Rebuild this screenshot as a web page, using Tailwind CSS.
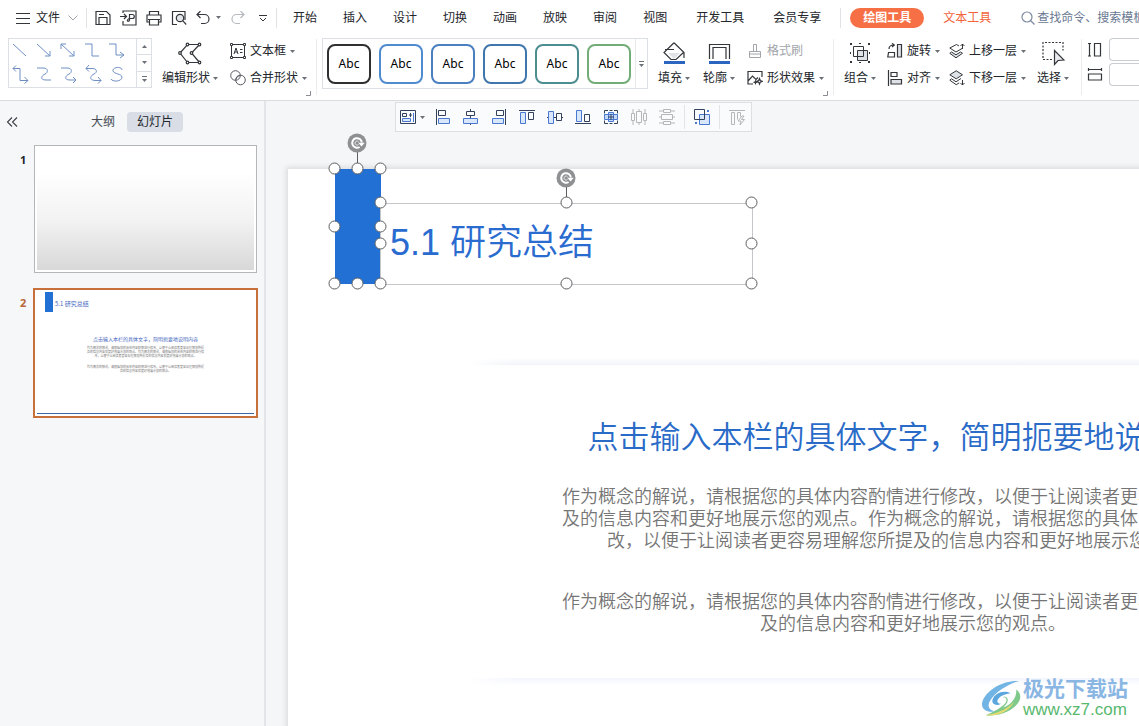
<!DOCTYPE html>
<html lang="zh-CN">
<head>
<meta charset="utf-8">
<title>WPS 演示</title>
<meta name="viewport" content="width=device-width, initial-scale=1">
<script src="https://cdn.jsdelivr.net/npm/@tailwindcss/browser@4"></script>
</head>
<body class="flex h-screen flex-col overflow-hidden bg-[#f5f6f8] font-['Liberation_Sans','Noto_Sans_CJK_SC',sans-serif] text-xs text-[#23262b]">
<svg class="hidden" aria-hidden="true">
  <symbol id="caret" viewBox="0 0 5 3"><path d="M0 0h5L2.500 3z" fill="#6b6f76"/></symbol>
  <symbol id="corner" viewBox="0 0 5 5"><path d="M4.500 0v4.500H0" fill="none" stroke="#8a8e94"/></symbol>
  <symbol id="rot" viewBox="0 0 20 20"><circle cx="10" cy="10" r="9.500" fill="#8f9092"/><path d="M12.600 14A4.800 4.800 0 1 1 14.800 9.500" fill="none" stroke="#fff" stroke-width="2"/><path d="M11.300 9.800h6.400l-3.200 3.800z" fill="#fff"/><path d="M11.600 11.300a2 2 0 1 1 .1-2.300" fill="none" stroke="#e4e4e4"/></symbol>
</svg>

<header class="shrink-0 overflow-hidden border-b border-[#d9dce0] bg-white">
  <!-- Menu bar -->
  <nav class="flex h-[35px] items-center whitespace-nowrap pl-4">
    <button class="flex items-center gap-[6px]">
      <svg class="size-[14px]" viewBox="0 0 14 14" stroke="#33363b"><path d="M0 2.500h14M0 7.500h14M0 12.500h14"/></svg>
      文件
      <svg class="ml-[2px] h-[6px] w-[10px]" viewBox="0 0 10 6" fill="none" stroke="#a0a4aa"><path d="M.5.500 5 5 9.500.500"/></svg>
    </button>
    <span class="ml-2 h-5 w-px bg-[#e0e2e5]"></span>
    <div class="ml-2 flex items-center gap-[9px]">
      <button aria-label="保存"><svg class="size-4" viewBox="0 0 16 16" fill="none" stroke="#33363b" stroke-width="1.200"><path d="M1 1.500h10.500L15 5v9.500H1zM4 14.500V7.500h8v7M4 4.500h5"/></svg></button>
      <button aria-label="输出为PDF"><svg class="h-4 w-[17px]" viewBox="0 0 17 16" fill="none" stroke="#33363b" stroke-width="1.200"><path d="M3 3V1h13v14H3v-4M0 6.500h6M4 4l2.500 2.500L4 9M9.500 4.500h2.800a1.900 1.900 0 0 1 0 4H9.500zM9.500 4.500v5.500c0 2-2.800 1.200-2 0 .5-1 1.500-1.500 2-1.500"/></svg></button>
      <button aria-label="打印"><svg class="size-4" viewBox="0 0 16 16" fill="none" stroke="#33363b" stroke-width="1.200"><path d="M3.500 5V1.500h9V5M3.500 12H1V5h14v7h-2.500M3.500 9.500h9v5.500h-9zM2 9.500h12"/></svg></button>
      <button aria-label="打印预览"><svg class="size-4" viewBox="0 0 16 16" fill="none" stroke="#33363b" stroke-width="1.200"><path d="M6 14.500H1.500v-13h12.500V10"/><circle cx="9" cy="8" r="3.700" fill="#e3e6ea"/><path d="m11.700 10.700 3.500 3.800"/></svg></button>
    </div>
    <button aria-label="撤销" class="ml-[9px] flex items-center gap-[6px]"><svg class="size-[14px]" viewBox="0 0 14 14" fill="none" stroke="#33363b" stroke-width="1.200"><path d="M4.500 0 1 3.500 4.500 7M1 3.500h7.500a4.500 4.500 0 0 1 0 9H5"/></svg><svg class="h-[3px] w-[5px]"><use href="#caret"/></svg></button>
    <button aria-label="恢复" class="ml-[10px]"><svg class="size-[14px]" viewBox="0 0 14 14" fill="none" stroke="#b5b8bc" stroke-width="1.200"><path d="M9.500 0 13 3.500 9.500 7M13 3.500H5.500a4.500 4.500 0 0 0 0 9H9"/></svg></button>
    <button aria-label="更多" class="ml-[14px]"><svg class="size-2" viewBox="0 0 8 8" fill="none" stroke="#33363b"><path d="M0 1.500h8M1 4l3 3 3-3"/></svg></button>
    <span class="ml-[9px] h-5 w-px bg-[#e0e2e5]"></span>
    <div class="ml-4 flex items-center gap-[26px]">
      <button>开始</button><button>插入</button><button>设计</button><button>切换</button><button>动画</button><button>放映</button><button>审阅</button><button>视图</button>
    </div>
    <div class="ml-[29px] flex items-center gap-[29px]"><button>开发工具</button><button>会员专享</button></div>
    <span class="ml-[19px] h-5 w-px bg-[#e0e2e5]"></span>
    <button class="ml-[9px] h-5 rounded-full bg-[#f76f45] px-[13px] font-bold text-white">绘图工具</button>
    <button class="ml-[19px] text-[#f2633a]">文本工具</button>
    <label class="ml-[30px] flex min-w-0 flex-1 items-center gap-[2px]">
      <svg class="size-[14px] shrink-0" viewBox="0 0 14 14" fill="none" stroke="#7f8ba3" stroke-width="1.200"><circle cx="6" cy="6" r="5"/><path d="m9.500 9.500 4 4"/></svg>
      <input class="w-full min-w-0 bg-transparent outline-none placeholder:text-[#6a7892]" placeholder="查找命令、搜索模板" aria-label="搜索">
    </label>
  </nav>

  <!-- Ribbon -->
  <div class="flex h-[65px] whitespace-nowrap pl-2">
    <div class="mt-[3px] flex h-[50px] w-36 shrink-0 border border-[#dcdfe4]">
      <svg class="h-12 w-[127px]" viewBox="0 0 127 48" fill="none" stroke="#6f8fc4">
        <path d="m4 5 13 12M28 5l13 12m0-5v5h-5M52 5l13 12m0-5v5h-5M52 10V5h5M76 5h7v12h7M100 5h7v11h8m-4-3 4 3-4 3"/>
        <path d="M4 29.500h7v12h8M7 26.500l-3 3 3 3M15.500 38l3.500 3.500-3.500 3M28 29h6c6 0 5 5 2 6s-6 6 1 6h5M52 29h6c6 0 5 5 2 6s-6 6 1 6h6m-3-3 3 3-3 3M77 29.500h6c6 0 5 4.500 2 5.500s-6 6 1 6.500h6M80 26l-3 3.500 3 3M89 38l3 3.500-3 3M113 31c0-4-10-3-9 1 1 3 9 3 9 6 0 5-10 5-11 2"/>
      </svg>
      <div class="flex w-[15px] flex-col border-l border-[#dcdfe4]">
        <button aria-label="上一行" class="flex flex-1 items-center justify-center"><svg class="h-[3px] w-[5px] rotate-180"><use href="#caret"/></svg></button>
        <button aria-label="下一行" class="flex flex-1 items-center justify-center border-y border-[#dcdfe4]"><svg class="h-[3px] w-[5px]"><use href="#caret"/></svg></button>
        <button aria-label="更多形状" class="flex flex-1 flex-col items-center justify-center gap-[2px]"><span class="h-px w-[5px] bg-[#6b6f76]"></span><svg class="h-[3px] w-[5px]"><use href="#caret"/></svg></button>
      </div>
    </div>

    <button class="ml-[10px] flex w-[56px] shrink-0 flex-col items-center pt-[7px]">
      <svg class="h-6 w-[26px]" viewBox="0 0 26 24" fill="#fff" stroke="#33363b" stroke-width="1.200"><path d="M10.500 2.500h12l-8 8.500 8 9.500h-12L3 11z" fill="none"/><circle cx="10.500" cy="2.500" r="1.300"/><circle cx="22.500" cy="2.500" r="1.300"/><circle cx="14.500" cy="11" r="1.300"/><circle cx="22.500" cy="20.500" r="1.300"/><circle cx="10.500" cy="20.500" r="1.300"/><circle cx="3" cy="11" r="1.300"/></svg>
      <span class="mt-1 flex items-center gap-[3px]">编辑形状<svg class="h-[3px] w-[5px]"><use href="#caret"/></svg></span>
    </button>
    <div class="ml-3 flex w-[80px] shrink-0 flex-col gap-[2px] pt-1">
      <button class="flex h-6 items-center gap-1"><svg class="size-4" viewBox="0 0 16 16" fill="#fff" stroke="#33363b"><path d="M1.500 1.500h13v13h-13z"/><path d="M.5.500h2v2h-2zM13.500.500h2v2h-2zM.5 13.500h2v2h-2zM13.500 13.500h2v2h-2z"/><path d="M4 11 6 5l2 6M4.700 9h2.600M10 6.500h2.500M10 9.500h2.500" fill="none"/></svg>文本框<svg class="h-[3px] w-[5px]"><use href="#caret"/></svg></button>
      <button class="flex h-[26px] items-center gap-1"><svg class="size-4" viewBox="0 0 16 16" fill="none" stroke="#55585e"><circle cx="5.500" cy="5.500" r="4.800"/><circle cx="10.500" cy="10" r="4.800"/><path d="M5.800 9.600a4.800 4.800 0 0 1 4.400-4.200" fill="#dde0e4"/></svg>合并形状<svg class="h-[3px] w-[5px]"><use href="#caret"/></svg></button>
    </div>
    <svg class="-ml-1 mt-14 size-[5px] shrink-0"><use href="#corner"/></svg>
    <span class="ml-[5px] mt-1 h-14 w-px shrink-0 bg-[#eaecef]"></span>

    <div class="ml-[5px] mt-[3px] flex h-[51px] w-[326px] shrink-0 items-center border border-[#dcdfe4] pl-1 text-black">
      <div class="flex gap-2 font-['Noto_Sans','Noto_Sans_CJK_SC',sans-serif]">
        <button class="h-10 w-11 rounded-lg border-2 border-[#303030]">Abc</button>
        <button class="h-10 w-11 rounded-lg border-2 border-[#4f8bcf]">Abc</button>
        <button class="h-10 w-11 rounded-lg border-2 border-[#4a7fc0]">Abc</button>
        <button class="h-10 w-11 rounded-lg border-2 border-[#3f77ad]">Abc</button>
        <button class="h-10 w-11 rounded-lg border-2 border-[#4c8d90]">Abc</button>
        <button class="h-10 w-11 rounded-lg border-2 border-[#72ad77]">Abc</button>
      </div>
      <button aria-label="更多样式" class="ml-1 flex h-full flex-1 flex-col items-center justify-center gap-[2px] border-l border-[#e6e8eb]"><span class="h-px w-[5px] bg-[#6b6f76]"></span><svg class="h-[3px] w-[5px]"><use href="#caret"/></svg></button>
    </div>

    <button class="ml-[10px] flex w-8 shrink-0 flex-col items-center pt-[7px]">
      <svg class="h-6 w-[24px]" viewBox="0 0 24 24" fill="none" stroke="#33363b" stroke-width="1.200"><path d="M6 11h12l-6 6z" fill="#dfe3e8" stroke="none"/><path d="M12 .8 22 10.500V16M12 .8 2 10.500l7 7h5l7.500-7M3 7.500h9"/><path d="M2 20.500h21" stroke="#2a66c0" stroke-width="3"/></svg>
      <span class="mt-1 flex items-center gap-[3px]">填充<svg class="h-[3px] w-[5px]"><use href="#caret"/></svg></span>
    </button>
    <button class="ml-[13px] flex w-8 shrink-0 flex-col items-center pt-[7px]">
      <svg class="h-6 w-[24px]" viewBox="0 0 24 24" fill="none" stroke="#33363b" stroke-width="1.200"><path d="M2.500 17V2.500h20V17M6 17V5.500h13V17"/><path d="M2 20.500h21" stroke="#2a66c0" stroke-width="3"/></svg>
      <span class="mt-1 flex items-center gap-[3px]">轮廓<svg class="h-[3px] w-[5px]"><use href="#caret"/></svg></span>
    </button>
    <div class="ml-3 flex w-[77px] shrink-0 flex-col gap-[2px] pt-1">
      <button class="flex h-6 items-center gap-1 text-[#a2a5aa]"><svg class="size-4" viewBox="0 0 16 16" fill="none" stroke="#a2a5aa"><path d="M2.500 8.500h11v6h-11zM6.500 8.500v-7h3v7M2.500 11h11"/></svg>格式刷</button>
      <button class="flex h-[26px] items-center gap-1"><svg class="size-4" viewBox="0 0 16 16" fill="none" stroke="#33363b" stroke-width="1.200"><path d="M6 14H1V1.500h14V7M1 11l4.500-5L9 9.500l2-2"/><path d="m8.500 9.500.8 2 2 .8-2 .8-.8 2-.8-2-2-.8 2-.8z" fill="#33363b" stroke="none"/><path d="m12.500 8.500.8 2 2 .8-2 .8-.8 2-.8-2-2-.8 2-.8z"/></svg>形状效果<svg class="h-[3px] w-[5px]"><use href="#caret"/></svg></button>
    </div>
    <svg class="-ml-px mt-14 size-[5px] shrink-0"><use href="#corner"/></svg>
    <span class="ml-[5px] mt-1 h-14 w-px shrink-0 bg-[#eaecef]"></span>

    <button class="ml-[10px] flex w-8 shrink-0 flex-col items-center pt-[7px]">
      <svg class="h-6 w-[24px]" viewBox="0 0 24 24" fill="none" stroke="#33363b"><path d="M9.500 8.500h10v10h-10z" fill="#dfe3e8"/><path d="M5.500 4.500h10v10h-10z"/><path d="M2 1h2v2H2zM11 1h2v1h-2zM20 1h2v2h-2zM2 19h2v2H2zM11 20h2v1h-2zM20 19h2v2h-2zM2 10h1v2H2zM21 10h1v2h-1z" fill="#33363b" stroke="none"/></svg>
      <span class="mt-1 flex items-center gap-[3px]">组合<svg class="h-[3px] w-[5px]"><use href="#caret"/></svg></span>
    </button>
    <div class="ml-[11px] flex shrink-0 flex-col gap-[2px] pt-1">
      <button class="flex h-6 items-center gap-1"><svg class="size-4" viewBox="0 0 16 16" fill="none" stroke="#33363b" stroke-width="1.200"><path d="M10.500 1.500h4v12.500h-4z" fill="#dfe3e8"/><path d="M7.500 14H.8l.7-4.500h6zM2 6c0-3 2-4 5-4M5 .3 7.300 2 5 4"/></svg>旋转<svg class="h-[3px] w-[5px]"><use href="#caret"/></svg></button>
      <button class="flex h-[26px] items-center gap-1"><svg class="size-4" viewBox="0 0 16 16" fill="none" stroke="#33363b" stroke-width="1.200"><path d="M1.500 0v16M4 2.500h6v4H4z"/><path d="M4 9.500h10.500V14H4z" fill="#dfe3e8"/></svg>对齐<svg class="h-[3px] w-[5px]"><use href="#caret"/></svg></button>
    </div>
    <div class="ml-[9px] flex shrink-0 flex-col gap-[2px] pt-1">
      <button class="flex h-6 items-center gap-1"><svg class="size-4" viewBox="0 0 16 16" fill="none" stroke="#33363b"><path d="M10 3 7.500 1.500.8 5 7 9l6-3.500"/><path d="m2.500 9-1.700 1.300L7 14.800l6.500-4.500-2-1.300L7 11.800z" fill="#dfe3e8"/><path d="M13.500 6V1M11.500 3l2-2 2 2"/></svg>上移一层<svg class="h-[3px] w-[5px]"><use href="#caret"/></svg></button>
      <button class="flex h-[26px] items-center gap-1"><svg class="size-4" viewBox="0 0 16 16" fill="none" stroke="#33363b"><path d="M7.200.800 13.500 4.800 7.200 8.800.8 4.800z" fill="#dfe3e8"/><path d="M2.500 8.800.8 10.200l6.400 4.500 3-1.800M12 8.500l-5 3.300-4.500-3M13.500 10v5M11.500 13l2 2 2-2"/></svg>下移一层<svg class="h-[3px] w-[5px]"><use href="#caret"/></svg></button>
    </div>
    <button class="ml-[11px] flex w-8 shrink-0 flex-col items-center pt-[7px]">
      <svg class="h-6 w-[24px]" viewBox="0 0 24 24" fill="none" stroke="#33363b" stroke-width="1.200"><path d="M11 17.500H2v-17h20v8" stroke-dasharray="2 1.500"/><path d="M13.500 8.500v14l3.500-4 6-.5z" fill="#e8eaed"/></svg>
      <span class="mt-1 flex items-center gap-[3px]">选择<svg class="h-[3px] w-[5px]"><use href="#caret"/></svg></span>
    </button>
    <span class="ml-3 mt-1 h-14 w-px shrink-0 bg-[#eaecef]"></span>
    <div class="ml-[5px] flex min-w-0 flex-1 flex-col gap-[2px] pt-[3px]">
      <label class="flex items-center gap-[6px]"><svg class="size-4 shrink-0" viewBox="0 0 16 16" fill="none" stroke="#33363b" stroke-width="1.200"><path d="M7.500 1.500h6V14h-6zM1 1.500h3M1 14h3M2.500 1.500V14"/></svg><input aria-label="高度" class="h-[23px] min-w-0 flex-1 rounded-l-sm border border-r-0 border-[#c9ccd1]"></label>
      <label class="flex items-center gap-[6px]"><svg class="size-4 shrink-0" viewBox="0 0 16 16" fill="none" stroke="#33363b" stroke-width="1.200"><path d="M1.500 7h13v6h-13zM1.500 1v3M14.500 1v3M1.500 2.500h13"/></svg><input aria-label="宽度" class="h-[23px] min-w-0 flex-1 rounded-l-sm border border-r-0 border-[#c9ccd1]"></label>
    </div>
  </div>
</header>

<main class="flex min-h-0 flex-1">
  <!-- Slide list -->
  <aside class="w-[266px] shrink-0 border-r-2 border-[#e2e4e8] bg-[#f5f7f9]">
    <div class="flex items-center pl-[6px] pt-[11px]">
      <button aria-label="收起"><svg class="h-[10px] w-3" viewBox="0 0 12 10" fill="none" stroke="#3c4046" stroke-width="1.100"><path d="M6 .500 1.500 5 6 9.500M11 .500 6.500 5l4.500 4.500"/></svg></button>
      <button class="ml-[73px] text-[#454a52]">大纲</button>
      <button class="ml-3 h-5 rounded-sm bg-[#d8dde6] px-[10px]">幻灯片</button>
    </div>
    <ol class="mt-[13px] flex flex-col gap-[15px] font-['Noto_Sans',sans-serif] font-bold">
      <li class="flex pl-5"><span class="w-[14px] pt-2 text-[11px]">1</span>
        <div class="h-32 w-[223px] border border-[#b4b6b9] bg-white p-[2px]"><div class="h-full bg-linear-to-b from-white from-20% via-[#f2f2f2] via-60% to-[#d8d8d8]"></div></div></li>
      <li class="flex pl-5"><span class="w-[13px] pt-2 text-[11px] text-[#b8683a]">2</span>
        <div class="flex h-[130px] w-[225px] flex-col border-2 border-[#c7703c] bg-white px-[2px] pt-[2px] font-['Noto_Sans_CJK_SC',sans-serif] font-normal">
          <div class="flex pl-2 text-[6px] leading-[8px] text-[#4668c0]"><span class="mr-[2px] h-5 w-2 bg-[#2270d4]"></span><span class="pt-2">5.1 研究总结</span></div>
          <p class="mt-[23px] text-center text-[5px] leading-[8px] text-[#4668c0]">点击输入本栏的具体文字，简明扼要地说明内容</p>
          <p class="mt-[3px] text-center text-[3px] leading-[4px] text-[#777]">作为概念的解说，请根据您的具体内容酌情进行修改，以便于让阅读者更容易理解您所提<br>及的信息内容和更好地展示您的观点。作为概念的解说，请根据您的具体内容酌情进行修<br>改，以便于让阅读者更容易理解您所提及的信息内容和更好地展示您的观点。</p>
          <p class="mt-[7px] text-center text-[3px] leading-[4px] text-[#777]">作为概念的解说，请根据您的具体内容酌情进行修改，以便于让阅读者更容易理解您所提<br>及的信息内容和更好地展示您的观点。</p>
          <div class="mb-[2px] mt-auto h-px bg-[#3868a8]"></div>
        </div></li>
    </ol>
  </aside>

  <!-- Editing canvas -->
  <section class="relative min-w-0 flex-1 overflow-hidden bg-[#f5f6f8]">
    <div class="absolute left-[22px] top-[68px] h-[704px] w-[1250px] bg-white shadow-[0_0_5px_2px_#dcdde0]">
      <div class="absolute left-[181px] right-[181px] top-[189px] h-[7px] bg-linear-to-b from-white to-[#f1f3f8] mask-x-from-95%"></div>
      <div class="absolute left-[181px] right-[181px] top-[509px] h-[8px] bg-linear-to-b from-[#f4f6fd] to-white mask-x-from-95%"></div>
      <div class="flex flex-col items-center pt-[246px] text-center">
        <h2 class="text-[31px] font-[350] leading-[46px] text-[#2a6bc8]">点击输入本栏的具体文字，简明扼要地说明内容</h2>
        <p class="mt-[25px] w-[710px] text-lg font-[350] leading-[22px] text-[#757575]">作为概念的解说，请根据您的具体内容酌情进行修改，以便于让阅读者更容易理解您所提<br>及的信息内容和更好地展示您的观点。作为概念的解说，请根据您的具体内容酌情进行修<br>改，以便于让阅读者更容易理解您所提及的信息内容和更好地展示您的观点。</p>
        <p class="mt-[39px] w-[710px] text-lg font-[350] leading-[22px] text-[#757575]">作为概念的解说，请根据您的具体内容酌情进行修改，以便于让阅读者更容易理解您所提<br>及的信息内容和更好地展示您的观点。</p>
      </div>
      <!-- Blue bar, selected -->
      <div class="absolute left-[47px] top-0 h-[115px] w-[46px] bg-[#2270d4]"></div>
      <!-- Title text box, selected -->
      <h1 class="absolute left-[92px] top-[34px] flex h-[82px] w-[373px] items-center border border-[#c4c6c9] pb-[3px] pl-[9px] text-4xl font-[350] text-[#2a6bd0]">5.1 研究总结</h1>
      <svg class="absolute left-[22px] top-[-38px] h-[166px] w-[460px]" viewBox="0 0 460 166" fill="#fff" stroke="#5c5e61">
        <path d="M47.500 18v14M256.500 54v12"/>
        <use href="#rot" x="37" y="2" width="20" height="20" stroke="none"/>
        <use href="#rot" x="246" y="37" width="20" height="20" stroke="none"/>
        <circle cx="24.500" cy="37.500" r="5.500"/><circle cx="47.500" cy="37.500" r="5.500"/><circle cx="70.500" cy="37.500" r="5.500"/>
        <circle cx="24.500" cy="95.500" r="5.500"/><circle cx="70.500" cy="95.500" r="5.500"/>
        <circle cx="24.500" cy="152.500" r="5.500"/><circle cx="47.500" cy="152.500" r="5.500"/>
        <circle cx="70.500" cy="71.500" r="5.500"/><circle cx="256.500" cy="71.500" r="5.500"/><circle cx="441.500" cy="71.500" r="5.500"/>
        <circle cx="70.500" cy="112.500" r="5.500"/><circle cx="441.500" cy="112.500" r="5.500"/>
        <circle cx="70.500" cy="152.500" r="5.500"/><circle cx="256.500" cy="152.500" r="5.500"/><circle cx="441.500" cy="152.500" r="5.500"/>
      </svg>
    </div>

    <!-- Floating alignment toolbar -->
    <div class="absolute left-[129px] top-[1px] flex h-[30px] items-center border border-[#dcdee2] bg-[#fafbfc] pl-1 pr-[6px]" role="toolbar">
      <button aria-label="对齐方式" class="flex items-center gap-1"><svg class="size-4" viewBox="0 0 16 16" fill="none" stroke="#33415c"><path d="M.5 1.500h15v13H.5zM2.500 4.500h4v3h-4zM9 6h3M10.500 4v4"/><path d="M2.500 9.500h8v3h-8zM13.500 4v9" stroke="#4a78d0" fill="#d9e7fa"/></svg><svg class="h-[3px] w-[5px]"><use href="#caret"/></svg></button>
      <div class="ml-[10px] flex gap-3">
        <button aria-label="左对齐"><svg class="size-4" viewBox="0 0 16 16" fill="none" stroke="#33415c"><path d="M1.500 0v16M3.500 1.500h7v5h-7z"/><path d="M3.500 9.500h11v5h-11z" stroke="#4a78d0" fill="#d9e7fa"/></svg></button>
        <button aria-label="水平居中"><svg class="size-4" viewBox="0 0 16 16" fill="none" stroke="#33415c"><path d="M7.500 0v2M7.500 6.500v3M7.500 14.500V16M3.500 2.500h8v4h-8z"/><path d="M.5 9.500h14v5H.5z" stroke="#4a78d0" fill="#d9e7fa"/></svg></button>
        <button aria-label="右对齐"><svg class="size-4" viewBox="0 0 16 16" fill="none" stroke="#33415c"><path d="M14.500 0v16M5.500 1.500h7v5h-7z"/><path d="M1.500 9.500h11v5h-11z" stroke="#4a78d0" fill="#d9e7fa"/></svg></button>
        <button aria-label="顶端对齐"><svg class="size-4" viewBox="0 0 16 16" fill="none" stroke="#33415c"><path d="M0 1.500h16M9.500 3.500h5v7h-5z"/><path d="M1.500 3.500h5v11h-5z" stroke="#4a78d0" fill="#d9e7fa"/></svg></button>
        <button aria-label="垂直居中"><svg class="size-4" viewBox="0 0 16 16" fill="none" stroke="#33415c"><path d="M0 8.500h1.500M6.500 8.500h3M14.500 8.500H16M9.500 4.500h5v7h-5z"/><path d="M1.500 2.500h5v12h-5z" stroke="#4a78d0" fill="#d9e7fa"/></svg></button>
        <button aria-label="底端对齐"><svg class="size-4" viewBox="0 0 16 16" fill="none" stroke="#33415c"><path d="M0 14.500h16M9.500 5.500h5v7h-5z"/><path d="M1.500 1.500h5v11h-5z" stroke="#4a78d0" fill="#d9e7fa"/></svg></button>
        <button aria-label="中心对齐"><svg class="size-4" viewBox="0 0 16 16" fill="none" stroke="#33415c"><path d="M1.500 4.500v-3H5M11 1.500h3.500v3M14.500 11.500v3H11M5 14.500H1.500v-3M6.500 1.500h3M6.500 14.500h3"/><path d="M1.500 5.500h13v5h-13zM5.500 3.500h5v9h-5z" stroke="#4a78d0" fill="#c5d9f7"/><path d="M8 5v6M5 8h6"/></svg></button>
        <button aria-label="横向分布"><svg class="size-4" viewBox="0 0 16 16" fill="none" stroke="#b4b6ba"><path d="M.5 4.500h3v7h-3zM12.500 4.500h3v7h-3zM5.500 2.500h5v11h-5zM2 0v4.500M2 11.500V16M14 0v4.500M14 11.500V16M8 0v2.500M8 13.500V16"/></svg></button>
        <button aria-label="纵向分布"><svg class="size-4" viewBox="0 0 16 16" fill="none" stroke="#b4b6ba"><path d="M4.500.500h7v3h-7zM4.500 12.500h7v3h-7zM2.500 5.500h11v5h-11zM0 2h4.500M11.500 2H16M0 14h4.500M11.500 14H16M0 8h2.500M13.500 8H16"/></svg></button>
      </div>
      <span class="ml-[9px] h-6 w-px bg-[#e2e4e7]"></span>
      <button aria-label="组合" class="ml-[9px]"><svg class="size-4" viewBox="0 0 16 16" fill="none"><path d="M5.500 5.500h10v10h-10z" stroke="#4a78d0" fill="#d9e7fa"/><path d="M.5.500h10v10H.5z" stroke="#33415c"/><path d="M13 1h2v2h-2zM1 13h2v2H1z" fill="#4a78d0"/></svg></button>
      <span class="ml-[9px] h-6 w-px bg-[#e2e4e7]"></span>
      <button aria-label="智能对齐" class="ml-[9px]"><svg class="size-4" viewBox="0 0 16 16" fill="none" stroke="#b4b6ba"><path d="M0 1.500h16M2.500 3.500h3v12h-3zM8.500 10.500v-7h3v4M13 7l-4 5h3l-1 4 4.500-5.500h-3L15 7z"/></svg></button>
    </div>

    <!-- Site watermark -->
    <div class="absolute bottom-[6px] right-[11px] flex items-center gap-[2px]">
      <svg class="h-[38px] w-10" viewBox="0 0 42 40"><path d="M40 1C23 0 7 10 2 21c-4 9 4 14 13 12C8 32 6 27 10 21 15 13 27 5 40 1z" fill="#72b4e4"/><path d="M31 14c-7-4-17 0-19 7-1 4 4 7 9 4-3 0-5-2-3-5 3-4 8-5 13-6z" fill="#5ba6dd"/><path d="M20 18c6-1 9 2 5 7-4 4-10 8-20 12 17 2 33-7 36-17 1-5-1-8-4-10 1 8-5 16-14 19 5-4 7-9 3-11-2-1-4 0-6 0z" fill="#7fc98a"/><path d="M5 37c8-1 20-4 30-14-6 10-17 16-30 14z" fill="#e3dc72"/></svg>
      <div class="flex flex-col"><span class="text-[21px] font-bold leading-[22px] text-[#8ab6e3]">极光下载站</span><a href="#" class="text-[17px] leading-[20px] text-[#58b86e]">www.xz7.com</a></div>
    </div>
  </section>
</main>
</body>
</html>
